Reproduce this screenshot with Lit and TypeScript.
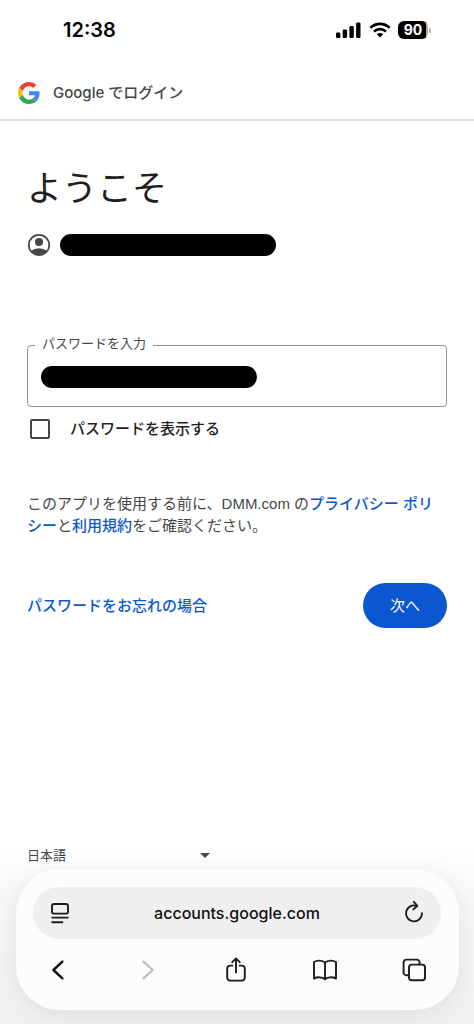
import { LitElement, html, css, svg } from "lit";
import { customElement, state } from "lit/decorators.js";

const signalIcon = html`<svg width="26" height="17" viewBox="0 0 26 17" aria-hidden="true">
  ${[
    [0, 10.5],
    [6.7, 7.5],
    [13.4, 4],
    [20.1, 0.5],
  ].map(([x, y]) => svg`<rect x=${x} y=${y} width="4.4" height=${16 - y} rx="1.3" fill="#000" />`)}
</svg>`;

const wifiIcon = html`<svg width="22" height="16" viewBox="0 0 22 16" aria-hidden="true">
  <g fill="none" stroke="#000" stroke-width="2.7">
    <path d="M1.4 5.9C6.9.6 15.1.6 20.6 5.9" />
    <path d="M5 9.6C8.4 6.3 13.6 6.3 17 9.6" />
  </g>
  <path d="M7.7 12.3C9.6 10.6 12.4 10.6 14.3 12.3L11 15.6z" fill="#000" />
</svg>`;

const googleIcon = html`<svg width="22" height="22" viewBox="0 0 48 48" aria-hidden="true">
  <path fill="#EA4335" d="M24 9.5c3.54 0 6.71 1.22 9.21 3.6l6.85-6.85C35.9 2.38 30.47 0 24 0 14.62 0 6.51 5.38 2.56 13.22l7.98 6.19C12.43 13.72 17.74 9.5 24 9.5z" />
  <path fill="#4285F4" d="M46.98 24.55c0-1.57-.15-3.09-.38-4.55H24v9.02h12.94c-.58 2.96-2.26 5.48-4.78 7.18l7.73 6c4.51-4.18 7.09-10.36 7.09-17.65z" />
  <path fill="#FBBC05" d="M10.53 28.59c-.48-1.45-.76-2.99-.76-4.59s.27-3.14.76-4.59l-7.98-6.19C.92 16.46 0 20.12 0 24c0 3.88.92 7.54 2.56 10.78l7.97-6.19z" />
  <path fill="#34A853" d="M24 48c6.48 0 11.93-2.13 15.89-5.81l-7.73-6c-2.15 1.45-4.92 2.3-8.16 2.3-6.26 0-11.57-4.22-13.47-9.91l-7.98 6.19C6.51 42.62 14.62 48 24 48z" />
</svg>`;

const accountIcon = html`<svg width="24" height="24" viewBox="0 0 24 24" aria-hidden="true">
  <defs><clipPath id="face"><circle cx="12" cy="12" r="10" /></clipPath></defs>
  <circle cx="12" cy="12" r="10.2" fill="none" stroke="#444746" stroke-width="1.7" />
  <circle cx="12" cy="9" r="4" fill="#444746" />
  <ellipse cx="12" cy="20.8" rx="8.6" ry="5.6" fill="#444746" clip-path="url(#face)" />
</svg>`;

const line = (body: unknown, color = "#1c1c1c", width = 1.9) => html`<svg
  width="28" height="28" viewBox="0 0 28 28" fill="none" aria-hidden="true"
  stroke=${color} stroke-width=${width} stroke-linecap="round" stroke-linejoin="round">${body}</svg>`;

const readerIcon = line(svg`<rect x="6" y="5" width="16" height="9.6" rx="2.2" /><path d="M6.200 18.600h15.600M6.200 23.200h10.200" />`);
const reloadIcon = line(svg`<path d="M16.600 6.800A8 8 0 1 0 22 14.200" /><path d="M13.800 2.800l3.600 4-4 3.600" />`);
const backIcon = line(svg`<path d="M18.4 5.600L9.400 14l9 8.400" />`, "#111", 2.4);
const forwardIcon = line(svg`<path d="M10.6 5.600l9 8.400-9 8.400" />`, "#bdbdbd", 2.2);
const shareIcon = line(svg`<path d="M10.4 9.6H8.200a3 3 0 0 0-3 3v9a3 3 0 0 0 3 3h11.600a3 3 0 0 0 3-3v-9a3 3 0 0 0-3-3h-2.200" /><path d="M14 16.4V2.6M10.2 6.200L14 2.4l3.800 3.800" />`);
const bookIcon = line(svg`<path d="M14 6.600C11.600 4.200 6 4 3 6v16.600c3-1.800 8.400-1.800 11 .6 2.600-2.400 8-2.400 11-.6V6C22 4 16.400 4.200 14 6.600zM14 6.600v16.400" />`);
const tabsIcon = line(svg`<rect x="9" y="8.600" width="16" height="15.600" rx="2.800" /><path d="M9 19.200H6.400a2.800 2.800 0 0 1-2.800-2.800V6.400a2.800 2.800 0 0 1 2.800-2.800h10.400a2.800 2.800 0 0 1 2.800 2.800v2" />`);

@customElement("status-bar")
class StatusBar extends LitElement {
  static styles = css`
    :host { display: flex; align-items: center; justify-content: space-between; height: 60px; padding: 0 43px 0 63px; box-sizing: border-box; color: #000; }
    .time { font-size: 20px; font-weight: 600; }
    .icons { display: flex; align-items: center; gap: 7px; }
    .battery { display: flex; align-items: center; gap: 1px; }
    .level { width: 30px; height: 18px; border-radius: 6px; background: linear-gradient(90deg, #000 92%, #aaa 92%); color: #fff; font-size: 14px; line-height: 18px; font-weight: 700; text-align: center; }
    .nub { width: 2px; height: 5px; border-radius: 0 2px 2px 0; background: #bbb; }
  `;
  render() {
    return html`<span class="time">12:38</span>
      <div class="icons">
        ${signalIcon}${wifiIcon}
        <span class="battery"><span class="level">90</span><span class="nub"></span></span>
      </div>`;
  }
}

@customElement("browser-bar")
class BrowserBar extends LitElement {
  static styles = css`
    :host { display: block; margin: 0 15px 14px 16px; padding: 18px 0; border-radius: 44px; background: #fcfcfc; box-shadow: 0 4px 24px rgba(0, 0, 0, 0.08); }
    button { display: grid; place-items: center; padding: 0; border: 0; background: none; width: 44px; height: 44px; }
    svg { display: block; }
    .address { display: flex; align-items: center; justify-content: space-between; height: 52px; margin: 0 18px 0 17px; padding: 0 5px; border-radius: 26px; background: #efefef; }
    .url { flex: 1; min-width: 0; border: 0; background: none; padding: 0; outline: 0; text-align: center; font: 500 16px/24px Inter, sans-serif; color: #111; }
    .actions { display: flex; justify-content: space-between; padding: 9px 23px 0 20px; }
  `;
  render() {
    return html`<div class="address">
        <button aria-label="ページメニュー">${readerIcon}</button>
        <input class="url" type="text" aria-label="アドレス" value="accounts.google.com" />
        <button aria-label="再読み込み">${reloadIcon}</button>
      </div>
      <nav class="actions">
        <button aria-label="戻る">${backIcon}</button>
        <button aria-label="進む" disabled>${forwardIcon}</button>
        <button aria-label="共有">${shareIcon}</button>
        <button aria-label="ブックマーク">${bookIcon}</button>
        <button aria-label="タブ">${tabsIcon}</button>
      </nav>`;
  }
}

@customElement("app-root")
class AppRoot extends LitElement {
  @state() private reveal = false;

  static styles = css`
    :host { display: flex; flex-direction: column; min-height: 100vh; background: #fff; color: #1f1f1f; font-family: Inter, "Noto Sans CJK JP", sans-serif; font-size: 15px; line-height: 22px; }
    svg { display: block; flex: none; }
    a { color: #0b57d0; font-weight: 500; text-decoration: none; }
    .brand { display: flex; align-items: center; gap: 13px; height: 59px; padding: 5px 18px 0; box-sizing: border-box; border-bottom: 2px solid #e0e0e0; color: #444746; font-weight: 500; margin-top: 2px; }
    main { flex: 1; padding: 43px 27px 24px; }
    h1 { margin: 0; font-size: 35px; line-height: 48px; font-weight: 400; }
    .account { display: flex; align-items: center; gap: 9px; margin-top: 21px; }
    .redacted { display: block; width: 216px; height: 22px; border-radius: 11px; background: #000; }
    .field { position: relative; margin-top: 88px; }
    .field label { position: absolute; top: -13px; left: 8px; padding: 0 7px; background: #fff; color: #444746; font-size: 13px; }
    .field input { display: block; width: 100%; height: 62px; box-sizing: border-box; padding: 0 14px; border: 1px solid #8e9190; border-radius: 4px; background: none; font: inherit; outline: 0; }
    .field .redacted { position: absolute; top: 21px; left: 14px; }
    .show { display: flex; align-items: center; gap: 20px; margin-top: 11px; padding-left: 3px; font-weight: 500; }
    .show input { appearance: none; width: 20px; height: 20px; margin: 0; border: 2px solid #444746; border-radius: 2px; }
    .show input:checked { background: #0b57d0; border-color: #0b57d0; }
    .notice { margin: 53px 0 0; color: #444746; font-family: "Liberation Sans", "Noto Sans CJK JP", sans-serif; }
    .buttons { display: flex; align-items: center; justify-content: space-between; margin-top: 46px; }
    .next { height: 45px; padding: 0 27px; border: 0; border-radius: 23px; background: #0b57d0; color: #fff; font: inherit; }
    .bottom { background: linear-gradient(#fff, #f7f7f7 30%, #f0f0f0); }
    .language { position: relative; display: block; width: 184px; margin: 0 0 4px 27px; }
    .language select { appearance: none; display: block; width: 100%; padding: 0; border: 0; background: none; color: #444746; font: inherit; font-size: 13px; line-height: 20px; }
    .language svg { position: absolute; right: 1px; top: 8px; }
  `;

  render() {
    return html`<status-bar></status-bar>
      <header class="brand">${googleIcon}<span>Google でログイン</span></header>
      <main>
        <h1>ようこそ</h1>
        <div class="account">${accountIcon}<span class="redacted"></span></div>
        <div class="field">
          <input id="password" type=${this.reveal ? "text" : "password"} />
          <label for="password">パスワードを入力</label>
          <span class="redacted"></span>
        </div>
        <label class="show">
          <input type="checkbox" .checked=${this.reveal} @change=${() => (this.reveal = !this.reveal)} />
          <span>パスワードを表示する</span>
        </label>
        <p class="notice">このアプリを使用する前に、DMM.com の<a href="#privacy">プライバシー ポリシー</a>と<a href="#terms">利用規約</a>をご確認ください。</p>
        <div class="buttons">
          <a href="#forgot">パスワードをお忘れの場合</a>
          <button class="next">次へ</button>
        </div>
      </main>
      <footer class="bottom">
        <div class="language">
          <select aria-label="言語"><option>日本語</option></select>
          <svg width="10" height="5" viewBox="0 0 10 5" aria-hidden="true"><path d="M0 0h10L5 5z" fill="#444746" /></svg>
        </div>
        <browser-bar></browser-bar>
      </footer>`;
  }
}
